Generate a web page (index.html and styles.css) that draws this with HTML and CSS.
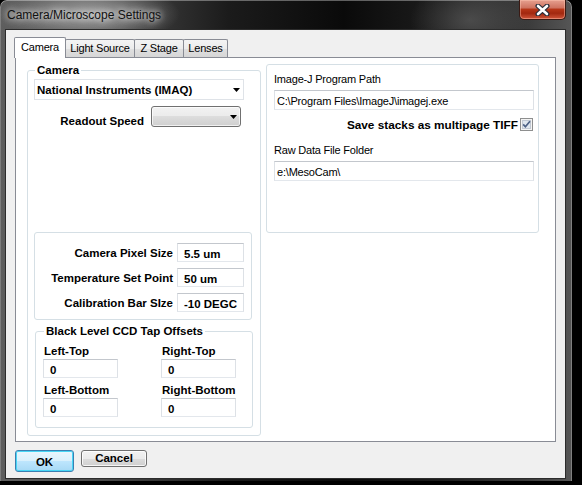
FILE: index.html
```html
<!DOCTYPE html>
<html>
<head>
<meta charset="utf-8">
<link rel="stylesheet" href="styles.css">
</head>
<body>
<div class="window">
  <div class="titlebar">
    <span class="title">Camera/Microscope Settings</span>
    <div class="close">
      <svg width="17" height="12" viewBox="0 0 17 12">
        <path d="M4 2 L13 10 M13 2 L4 10" stroke="#2a2e3a" stroke-width="5" stroke-linecap="round"/>
        <path d="M4 2 L13 10 M13 2 L4 10" stroke="#ffffff" stroke-width="2.6" stroke-linecap="round"/>
      </svg>
    </div>
  </div>
  <div class="client">
    <div class="tabs">
      <div class="tab sel w1">Camera</div>
      <div class="tab w2">Light Source</div>
      <div class="tab w3">Z Stage</div>
      <div class="tab w4">Lenses</div>
    </div>
    <div class="panel">
      <fieldset class="grp cam">
        <legend class="lg1">Camera</legend>
        <div class="combo">
          <span>National Instruments (IMAQ)</span>
          <svg class="arr" width="7" height="4" viewBox="0 0 7 4"><path d="M0 0 H7 L3.5 4 Z" fill="#000"/></svg>
        </div>
        <div class="readout">
          <span class="rlabel">Readout Speed</span>
          <div class="dd">
            <svg class="arr" width="7" height="4" viewBox="0 0 7 4"><path d="M0 0 H7 L3.5 4 Z" fill="#000"/></svg>
          </div>
        </div>
        <div class="grp inner">
          <div class="frow"><span class="flabel">Camera Pixel Size</span><div class="tb val">5.5 um</div></div>
          <div class="frow"><span class="flabel">Temperature Set Point</span><div class="tb val">50 um</div></div>
          <div class="frow"><span class="flabel">Calibration Bar SIze</span><div class="tb val">-10 DEGC</div></div>
        </div>
        <fieldset class="grp black">
          <legend class="lg2">Black Level CCD Tap Offsets</legend>
          <div class="offsets">
            <div class="cell"><div class="olabel">Left-Top</div><div class="tb oval">0</div></div>
            <div class="cell"><div class="olabel">Right-Top</div><div class="tb oval">0</div></div>
            <div class="cell row2"><div class="olabel">Left-Bottom</div><div class="tb oval">0</div></div>
            <div class="cell row2"><div class="olabel">Right-Bottom</div><div class="tb oval">0</div></div>
          </div>
        </fieldset>
      </fieldset>
      <div class="grp right">
        <div class="plabel">Image-J Program Path</div>
        <div class="tb path">C:\Program Files\ImageJ\imagej.exe</div>
        <div class="chkrow">
          <span class="chklabel">Save stacks as multipage TIFF</span>
          <span class="chk">
            <svg width="13" height="13" viewBox="0 0 13 13">
              <rect x="0.5" y="0.5" width="12" height="12" fill="#f4f4f4" stroke="#8e8f8f"/>
              <rect x="2.5" y="2.5" width="8" height="8" fill="#dfe6ee" stroke="#c2c9d3"/>
              <path d="M3.2 6.4 L5.4 8.8 L10 3.2" fill="none" stroke="#4d6185" stroke-width="1.7"/>
            </svg>
          </span>
        </div>
        <div class="plabel raw">Raw Data File Folder</div>
        <div class="tb path">e:\MesoCam\</div>
      </div>
    </div>
    <div class="buttons">
      <div class="btn ok">OK</div>
      <div class="btn cancel">Cancel</div>
    </div>
  </div>
</div>
</body>
</html>
```
FILE: styles.css
```css
* { box-sizing: border-box; }
html, body { margin: 0; }
body {
  width: 582px;
  height: 485px;
  overflow: hidden;
  background: #000;
  font-family: "Liberation Sans", Arial, sans-serif;
  color: #000;
}
.window {
  width: 572px;
  height: 481px;
  padding: 0 6px 2px 5px;
  border-radius: 7px 7px 0 0;
  display: flex;
  flex-direction: column;
  background:
    radial-gradient(ellipse 90px 30px at 90px 14px, rgba(170,170,170,0.9), rgba(120,120,120,0) 100%),
    radial-gradient(ellipse 60px 40px at 470px 20px, rgba(90,90,90,0.7), rgba(60,60,60,0) 100%),
    linear-gradient(90deg, #5e5e5e 0, #4a4a4a 18%, #1b1b1b 40%, #0a0a0a 60%, #1e1e1e 78%, #3a3a3a 92%, #565656 100%);
  box-shadow: inset 0 1px 0 rgba(255,255,255,0.35), inset 1px 0 0 rgba(255,255,255,0.2), inset -1px 0 0 rgba(255,255,255,0.25);
}
.titlebar {
  height: 29px;
  display: flex;
  align-items: flex-start;
}
.title {
  margin: 8px 0 0 2px;
  font-size: 12px;
  line-height: 14px;
  color: #111;
  text-shadow: 0 0 6px rgba(255,255,255,0.9), 0 0 10px rgba(255,255,255,0.7);
}
.close {
  margin-left: auto;
  width: 47px;
  height: 20px;
  border: 1px solid #3a1a14;
  border-top: none;
  border-radius: 0 0 5px 5px;
  background: linear-gradient(#e6a08f 0, #cf7461 40%, #b53517 50%, #a22810 70%, #d0553a 100%);
  box-shadow: inset 0 0 0 1px rgba(255,200,180,0.45);
  display: flex;
  align-items: center;
  justify-content: center;
}
.client {
  flex: 1;
  background: #f0f0f0;
  border: 1px solid #2c2c2c;
  display: flex;
  flex-direction: column;
}
.tabs {
  display: flex;
  align-items: flex-end;
  height: 20px;
  margin: 7px 0 0 8px;
}
.tab {
  height: 18px;
  margin-left: -1px;
  border: 1px solid #898c95;
  border-bottom: none;
  border-radius: 2px 2px 0 0;
  background: linear-gradient(#f4f4f4, #ececec 50%, #e0e0e0 50%, #d6d6d6);
  font-size: 11px;
  letter-spacing: -0.2px;
  line-height: 16px;
  text-align: center;
  position: relative;
}
.tab.sel {
  height: 21px;
  margin-bottom: -1px;
  margin-left: 0;
  background: #fff;
  line-height: 19px;
  z-index: 1;
}
.w1 { width: 52px; }
.w2 { width: 70px; }
.w3 { width: 50px; }
.w4 { width: 45px; }
.panel {
  width: 541px;
  height: 385px;
  margin-left: 9px;
  background: #fff;
  border: 1px solid #898c95;
  display: flex;
  align-items: flex-start;
}
.grp {
  border: 1px solid #d5dfe5;
  border-radius: 3px;
}
fieldset.grp {
  margin: 0;
  padding: 0;
  min-width: 0;
}
legend {
  font-size: 11.5px;
  font-weight: bold;
  line-height: 14px;
  padding: 0 2px;
}
.lg1 { margin-left: 7px; }
.lg2 { margin-left: 8px; }
fieldset.cam {
  margin: 5px 0 0 11px;
  width: 234px;
  height: 373px;
}
.combo {
  margin: 2px 0 0 6px;
  width: 210px;
  height: 21px;
  border: 1px solid #dfe3e8;
  display: flex;
  align-items: center;
  padding: 0 3px 0 2px;
  font-size: 11.5px;
  font-weight: bold;
}
.arr { margin-left: auto; }
.readout {
  display: flex;
  margin-top: 6px;
}
.rlabel {
  width: 116px;
  text-align: right;
  font-size: 11.5px;
  font-weight: bold;
  padding-top: 8px;
  line-height: 14px;
}
.dd {
  margin-left: 7px;
  width: 90px;
  height: 21px;
  border: 1px solid #707070;
  border-radius: 3px;
  background: linear-gradient(#f2f2f2, #ebebeb 50%, #dddddd 50%, #cfcfcf);
  box-shadow: inset 0 0 0 1px rgba(255,255,255,0.7);
  display: flex;
  align-items: center;
  padding-right: 3px;
}
.inner {
  margin: 104px 0 0 6px;
  width: 218px;
  height: 88px;
  padding-top: 10px;
  display: flex;
  flex-direction: column;
  gap: 6px;
}
.frow {
  display: flex;
  align-items: center;
  height: 19px;
}
.flabel {
  width: 138px;
  text-align: right;
  font-size: 11.5px;
  font-weight: bold;
}
.tb {
  background: #fff;
  border: 1px solid;
  border-color: #c3c7cd #dde1e6 #e3e7ec #dde1e6;
}
.val {
  margin-left: 4px;
  width: 67px;
  height: 19px;
  padding: 3px 0 0 6px;
  font-size: 11.5px;
  font-weight: bold;
  line-height: 14px;
}
fieldset.black {
  margin: 4px 0 0 7px;
  width: 218px;
  height: 104px;
}
.offsets {
  display: grid;
  grid-template-columns: 118px 118px;
  padding: 6px 0 0 7px;
  row-gap: 5px;
}
.olabel {
  font-size: 11.5px;
  font-weight: bold;
  line-height: 14px;
  padding-left: 1px;
}
.oval {
  margin-top: 1px;
  width: 75px;
  height: 19px;
  padding: 3px 0 0 6px;
  font-size: 11.5px;
  font-weight: bold;
  line-height: 14px;
}
.right {
  margin: 6px 0 0 5px;
  width: 273px;
  height: 169px;
  padding: 7px 0 0 7px;
}
.plabel {
  font-size: 11px;
  letter-spacing: -0.2px;
  line-height: 14px;
}
.path {
  margin-top: 4px;
  width: 260px;
  height: 20px;
  padding: 3px 0 0 2px;
  font-size: 11px;
  letter-spacing: -0.2px;
  line-height: 14px;
}
.chkrow {
  margin-top: 8px;
  height: 13px;
  display: flex;
  align-items: center;
  justify-content: flex-end;
  padding-right: 5px;
}
.chklabel {
  font-size: 11.8px;
  font-weight: bold;
  margin-right: 2px;
}
.chk { display: flex; }
.raw { margin-top: 12px; }
.buttons {
  display: flex;
  align-items: flex-start;
  gap: 7px;
  margin: 8px 0 0 9px;
}
.btn {
  border: 1px solid #707070;
  border-radius: 3px;
  background: linear-gradient(#f2f2f2, #ebebeb 50%, #dddddd 50%, #cfcfcf);
  box-shadow: inset 0 0 0 1px rgba(255,255,255,0.8);
  font-size: 11.5px;
  font-weight: bold;
  text-align: center;
}
.ok {
  width: 59px;
  height: 22px;
  line-height: 20px;
  border-color: #3c7fb1;
  background: linear-gradient(#eaf6fd, #d9f0fc 50%, #bee6fd 50%, #a7d9f5);
  box-shadow: inset 0 0 0 1px #48d6f5;
  padding-top: 1px;
}
.cancel {
  width: 66px;
  height: 17px;
  line-height: 15px;
}
```
